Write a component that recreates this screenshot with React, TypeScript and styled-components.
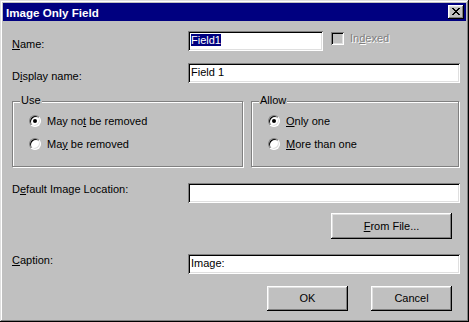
import styled, { createGlobalStyle } from "styled-components";

const GlobalStyle = createGlobalStyle`
  html, body {
    margin: 0;
    padding: 0;
    background: #c0c0c0;
  }
  body {
    font-family: "Liberation Sans", Arial, sans-serif;
    font-size: 11px;
    color: #000;
  }
`;

const Window = styled.div`
  width: 469px;
  height: 322px;
  box-sizing: border-box;
  padding: 3px;
  background: #c0c0c0;
  box-shadow: inset -1px -1px #000, inset 1px 1px #dfdfdf,
    inset -2px -2px #808080, inset 2px 2px #fff;
  display: flex;
  flex-direction: column;
`;

const TitleBar = styled.div`
  height: 18px;
  background: #000080;
  display: flex;
  align-items: center;
  justify-content: space-between;
  padding: 0 2px 0 3px;
`;

const Title = styled.span`
  color: #fff;
  font-weight: bold;
  font-size: 11.6px;
  line-height: 13px;
`;

const CloseButton = styled.button`
  width: 16px;
  height: 14px;
  padding: 0 0 1px;
  border: none;
  background: #c0c0c0;
  box-shadow: inset -1px -1px #000, inset 1px 1px #fff,
    inset -2px -2px #808080, inset 2px 2px #dfdfdf;
  display: flex;
  align-items: center;
  justify-content: center;
`;

const Body = styled.div`
  display: flex;
  flex-direction: column;
  padding: 0 6px 0 9px;
`;

const Row = styled.div<{ $top: number }>`
  display: flex;
  align-items: flex-start;
  margin-top: ${(p) => p.$top}px;
`;

const Label = styled.span<{ $offset: number }>`
  width: 176px;
  flex: none;
  line-height: 13px;
  padding-top: ${(p) => p.$offset}px;
`;

const Field = styled.div<{ $width?: number }>`
  ${(p) => (p.$width ? `width: ${p.$width}px;` : "flex: 1;")}
  height: 20px;
  box-sizing: border-box;
  background: #fff;
  padding: 3px 3px 0;
  line-height: 13px;
  white-space: nowrap;
  box-shadow: inset 1px 1px #808080, inset -1px -1px #fff,
    inset 2px 2px #000, inset -2px -2px #dfdfdf;
`;

const Selected = styled.span`
  background: #000080;
  color: #fff;
`;

const CheckWrap = styled.div`
  display: flex;
  align-items: center;
  margin-left: 8px;
  padding-top: 1px;
  gap: 6px;
`;

const CheckBox = styled.span`
  width: 13px;
  height: 13px;
  box-sizing: border-box;
  background: #c0c0c0;
  box-shadow: inset 1px 1px #808080, inset -1px -1px #fff,
    inset 2px 2px #000, inset -2px -2px #dfdfdf;
`;

const DisabledText = styled.span`
  color: #808080;
  text-shadow: 1px 1px 0 #fff;
  line-height: 13px;
`;

const GroupRow = styled.div`
  display: flex;
  gap: 8px;
  margin-top: 18px;
`;

const Group = styled.div<{ $width: number }>`
  position: relative;
  width: ${(p) => p.$width}px;
  height: 66px;
  box-sizing: border-box;
  border: 1px solid #808080;
  box-shadow: 1px 1px 0 #fff, inset 1px 1px 0 #fff;
  padding: 13px 0 0 16px;
  display: flex;
  flex-direction: column;
  gap: 11px;
`;

const GroupTitle = styled.span`
  position: absolute;
  top: -8px;
  left: 7px;
  padding: 0 1px;
  background: #c0c0c0;
  line-height: 13px;
`;

const RadioRow = styled.label`
  display: flex;
  align-items: center;
  gap: 6px;
  height: 12px;
  line-height: 13px;
`;

const Radio = styled.span<{ $checked?: boolean }>`
  position: relative;
  width: 12px;
  height: 12px;
  box-sizing: border-box;
  border-radius: 50%;
  background: #fff;
  border: 1px solid;
  border-color: #808080 #fff #fff #808080;
  box-shadow: inset 1px 1px #000, inset -1px -1px #dfdfdf;

  &::after {
    content: "";
    display: ${(p) => (p.$checked ? "block" : "none")};
    position: absolute;
    left: 3px;
    top: 3px;
    width: 4px;
    height: 4px;
    border-radius: 50%;
    background: #000;
  }
`;

const ButtonRow = styled.div<{ $top: number }>`
  display: flex;
  justify-content: flex-end;
  gap: 23px;
  margin-top: ${(p) => p.$top}px;
  padding-right: 8px;
`;

const Button = styled.button<{ $width: number; $height: number }>`
  width: ${(p) => p.$width}px;
  height: ${(p) => p.$height}px;
  border: none;
  padding: 0;
  background: #c0c0c0;
  font-family: "Liberation Sans", Arial, sans-serif;
  font-size: 11px;
  line-height: 13px;
  color: #000;
  box-shadow: inset -1px -1px #000, inset 1px 1px #fff,
    inset -2px -2px #808080, inset 2px 2px #dfdfdf;
`;

const Key = styled.span`
  text-decoration: underline;
  text-underline-offset: 1px;
`;

function CloseIcon() {
  return (
    <svg width="8" height="7" viewBox="0 0 8 7" shapeRendering="crispEdges">
      <path
        fill="#000"
        d="M0 0h2v1H0zM6 0h2v1H6zM1 1h2v1H1zM5 1h2v1H5zM2 2h4v1H2zM3 3h2v1H3zM2 4h4v1H2zM1 5h2v1H1zM5 5h2v1H5zM0 6h2v1H0zM6 6h2v1H6z"
      />
    </svg>
  );
}

export default function App() {
  return (
    <>
      <GlobalStyle />
      <Window>
        <TitleBar>
          <Title>Image Only Field</Title>
          <CloseButton type="button">
            <CloseIcon />
          </CloseButton>
        </TitleBar>
        <Body>
          <Row $top={10}>
            <Label $offset={7}>
              <Key>N</Key>ame:
            </Label>
            <Field $width={135}>
              <Selected>Field1</Selected>
            </Field>
            <CheckWrap>
              <CheckBox />
              <DisabledText>
                In<Key>d</Key>exed
              </DisabledText>
            </CheckWrap>
          </Row>
          <Row $top={12}>
            <Label $offset={7}>
              D<Key>i</Key>splay name:
            </Label>
            <Field>Field 1</Field>
          </Row>
          <GroupRow>
            <Group $width={231}>
              <GroupTitle>Use</GroupTitle>
              <RadioRow>
                <Radio $checked />
                <span>
                  May no<Key>t</Key> be removed
                </span>
              </RadioRow>
              <RadioRow>
                <Radio />
                <span>
                  Ma<Key>y</Key> be removed
                </span>
              </RadioRow>
            </Group>
            <Group $width={208}>
              <GroupTitle>Allow</GroupTitle>
              <RadioRow>
                <Radio $checked />
                <span>
                  <Key>O</Key>nly one
                </span>
              </RadioRow>
              <RadioRow>
                <Radio />
                <span>
                  <Key>M</Key>ore than one
                </span>
              </RadioRow>
            </Group>
          </GroupRow>
          <Row $top={16}>
            <Label $offset={0}>
              D<Key>e</Key>fault Image Location:
            </Label>
            <Field />
          </Row>
          <ButtonRow $top={10}>
            <Button type="button" $width={121} $height={26}>
              <Key>F</Key>rom File...
            </Button>
          </ButtonRow>
          <Row $top={15}>
            <Label $offset={0}>
              <Key>C</Key>aption:
            </Label>
            <Field>Image:</Field>
          </Row>
          <ButtonRow $top={12}>
            <Button type="button" $width={81} $height={25}>
              OK
            </Button>
            <Button type="button" $width={81} $height={25}>
              Cancel
            </Button>
          </ButtonRow>
        </Body>
      </Window>
    </>
  );
}
